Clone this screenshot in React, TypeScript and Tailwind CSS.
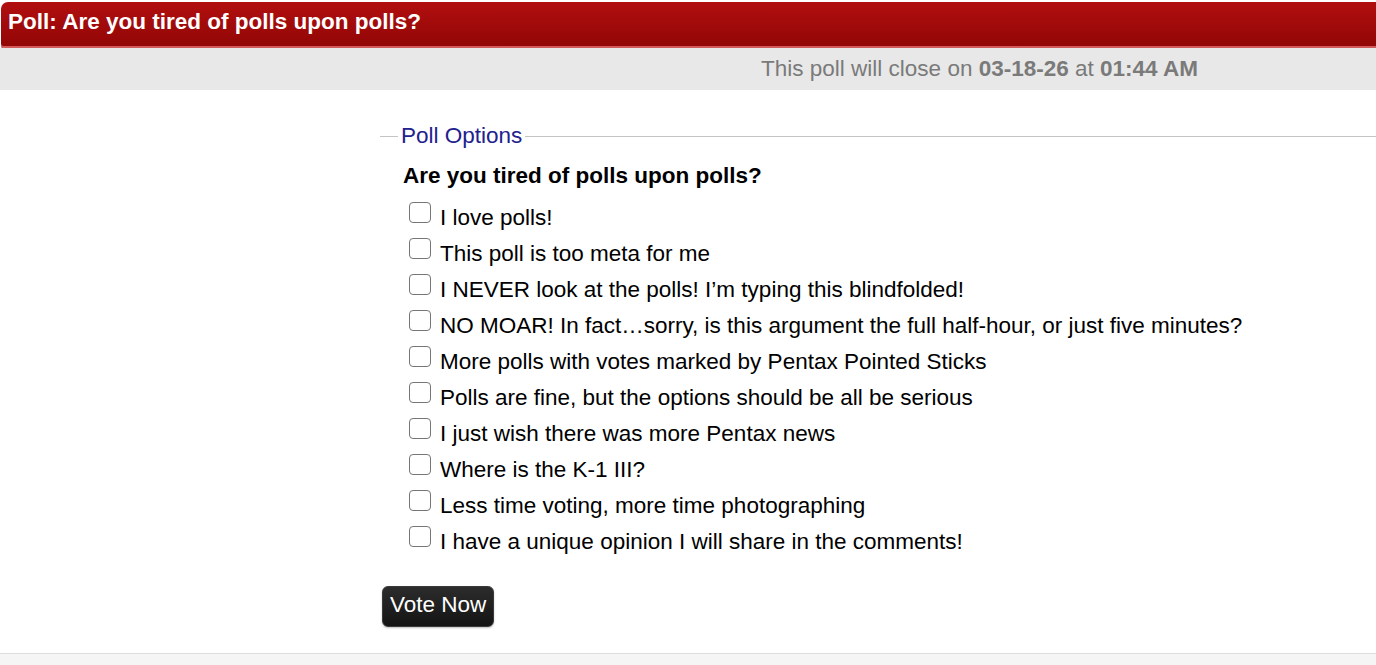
import React from "react";

const options = [
  "I love polls!",
  "This poll is too meta for me",
  "I NEVER look at the polls! I\u2019m typing this blindfolded!",
  "NO MOAR! In fact\u2026sorry, is this argument the full half-hour, or just five minutes?",
  "More polls with votes marked by Pentax Pointed Sticks",
  "Polls are fine, but the options should be all be serious",
  "I just wish there was more Pentax news",
  "Where is the K-1 III?",
  "Less time voting, more time photographing",
  "I have a unique opinion I will share in the comments!",
];

export default function App() {
  return (
    <div className="w-[1376px] h-[665px] bg-white overflow-hidden flex flex-col" style={{ fontFamily: '"Liberation Sans", Arial, sans-serif' }}>
      <div className="pt-[2px] pl-[1px]">
        <div className="h-[46px] rounded-tl-[7px] rounded-bl-[4px] bg-gradient-to-b from-[#b20f0f] to-[#920606] border-b-[2px] border-[#d25a5a] shadow-[0_1px_0_#7a0000] flex items-center pl-[7px] pb-[4px]">
          <span className="text-white font-bold text-[22.5px] leading-[26px]">Poll: Are you tired of polls upon polls?</span>
        </div>
      </div>
      <div className="h-[42px] bg-[#e8e8e8] flex items-center justify-end pr-[178px]">
        <span className="text-[#7a7a7a] text-[22.5px] leading-[26px]">
          This poll will close on <b>03-18-26</b> at <b>01:44 AM</b>
        </span>
      </div>
      <div className="pl-[380px] pt-[33px] flex-1">
        <div className="flex items-center h-[26px]">
          <div className="w-[18px] h-px bg-[#c4c4c4]" />
          <span className="px-[3px] text-[22.5px] leading-[26px] text-[#22228e]">Poll Options</span>
          <div className="flex-1 h-px bg-[#c4c4c4]" />
        </div>
        <div className="pl-[23px] pt-[14px] text-[22.5px] leading-[26px] font-bold text-black">Are you tired of polls upon polls?</div>
        <div className="pt-[10px] pl-[29px]">
          {options.map((o) => (
            <label key={o} className="flex items-start h-[36px]">
              <span className="mt-[3px] w-[22px] h-[21px] rounded-[4px] border border-[#767676] bg-white shrink-0" />
              <span className="ml-[9px] text-[22.5px] leading-[26px] mt-[6px] text-black whitespace-nowrap">{o}</span>
            </label>
          ))}
        </div>
        <div className="pt-[27px] pl-[2px]">
          <button className="h-[41px] px-[7px] pb-[3px] rounded-[6px] bg-gradient-to-b from-[#2c2c2c] to-[#141414] border border-[#3a3a3a] text-white text-[22.5px] leading-[26px] shadow-[0_1px_2px_rgba(0,0,0,0.25)]">
            Vote Now
          </button>
        </div>
      </div>
      <div className="h-[12px] border-t border-[#dddddd] bg-[#f5f5f5]" />
    </div>
  );
}
